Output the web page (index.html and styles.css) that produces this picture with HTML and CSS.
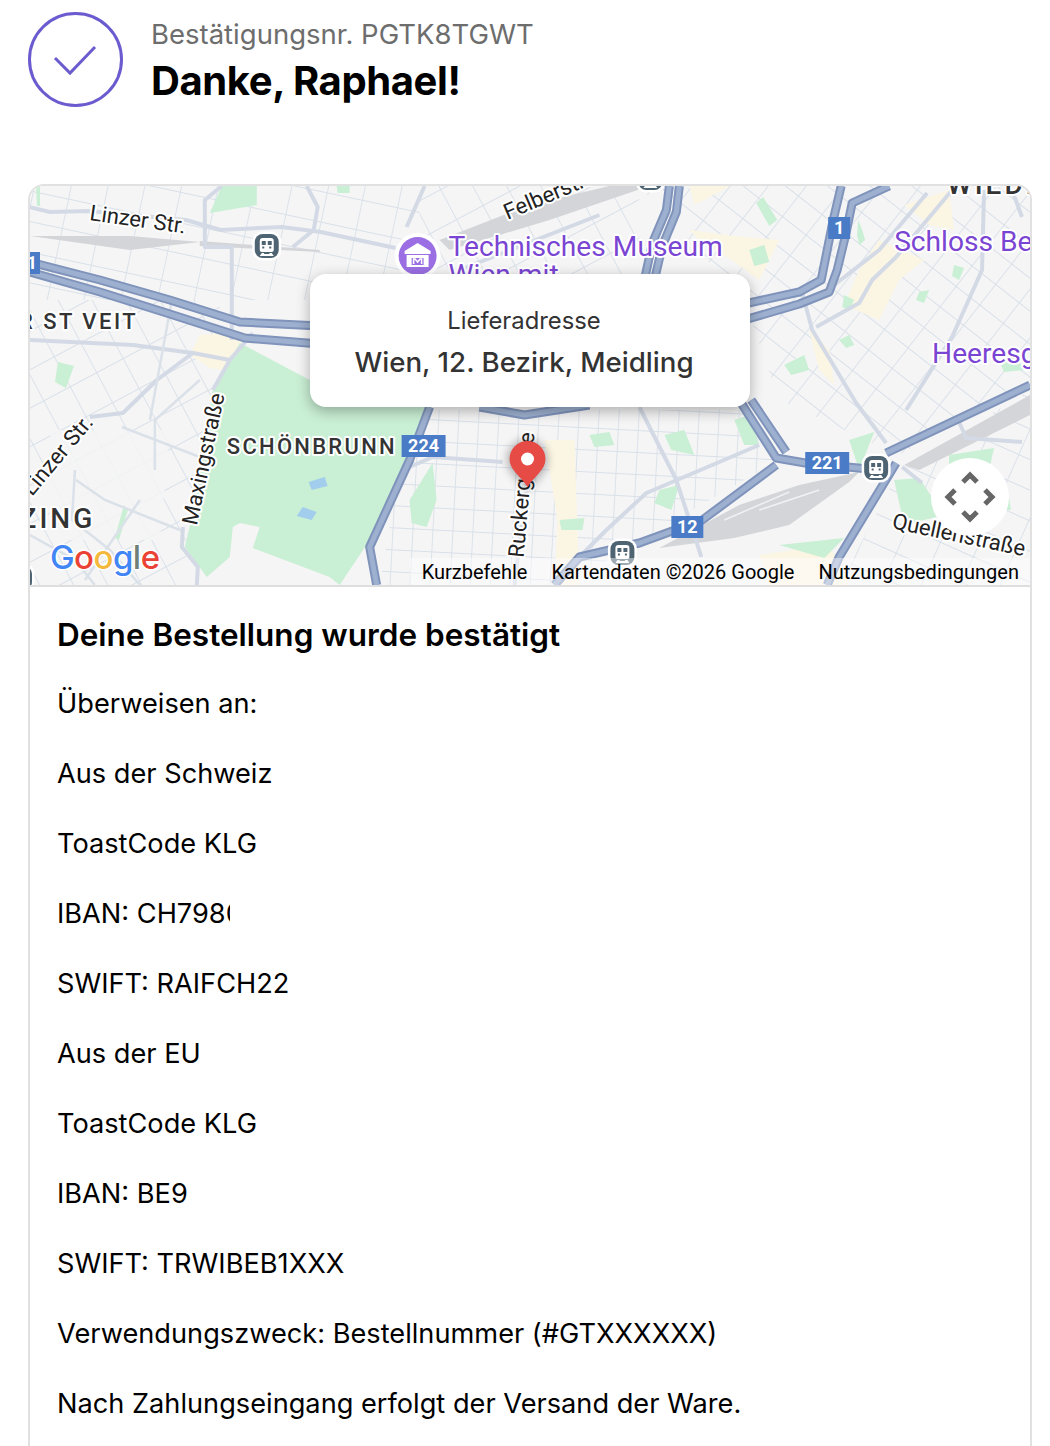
FILE: index.html
```html
<!DOCTYPE html>
<html lang="de">
<head>
<meta charset="utf-8">
<title>Danke</title>
<link rel="stylesheet" href="styles.css">
</head>
<body>
<header class="head">
  <svg class="check" viewBox="0 0 95 95" aria-hidden="true"><circle cx="47.500" cy="47.500" r="46" class="check-ring"/><path d="M27 46 L42 61 L67 35" class="check-tick"/></svg>
  <div class="head-text">
    <div class="conf">Bestätigungsnr. PGTK8TGWT</div>
    <h1 class="thanks">Danke, Raphael!</h1>
  </div>
</header>
<main class="card">
  <section class="map">
    <svg class="map-svg" viewBox="30 186 1001 399" preserveAspectRatio="none" aria-hidden="true">
      <defs>
        <pattern id="g1" width="36" height="30" patternUnits="userSpaceOnUse" patternTransform="rotate(12)"><path d="M0 0H36M0 0V30" class="fine"/></pattern>
        <pattern id="g2" width="30" height="34" patternUnits="userSpaceOnUse" patternTransform="rotate(-28)"><path d="M0 0H30M0 0V34" class="fine"/></pattern>
        <pattern id="g3" width="30" height="26" patternUnits="userSpaceOnUse" patternTransform="rotate(38)"><path d="M0 0H30M0 0V26" class="fine"/></pattern>
        <pattern id="g4" width="20" height="22" patternUnits="userSpaceOnUse" patternTransform="rotate(3)"><path d="M0 0H20M0 0V22" class="fine"/></pattern>
        <pattern id="g5" width="36" height="28" patternUnits="userSpaceOnUse" patternTransform="rotate(24)"><path d="M0 0H36M0 0V28" class="fine"/></pattern>
        <filter id="soft" x="-50%" y="-50%" width="200%" height="200%"><feGaussianBlur stdDeviation="5"/></filter>
        <g id="station">
          <rect x="-14.500" y="-14.500" width="29" height="29" rx="10" class="st-out"/>
          <rect x="-12" y="-12" width="24" height="24" rx="8" class="st-in"/>
          <path d="M-7 -5Q-7 -8 -4 -8H4Q7 -8 7 -5V4Q7 6 5 6H-5Q-7 6 -7 4ZM-5 -5V-1H-1V-5ZM1 -5V-1H5V-5ZM-4.500 2.500H-2.500V.5H-4.500ZM2.500 2.500H4.500V.5H2.500Z" class="st-ic"/>
          <path d="M-5 7H-2.500L-3 8H3L2.500 7H5L7 10H-7Z" class="st-ic"/>
        </g>
        <g id="hwlines">
          <path d="M30 262L100 280L170 300L240 322L320 326"/>
          <path d="M30 272L100 292L170 314L245 338L320 344"/>
          <path d="M670 186L667 210L653 243L645 280"/>
          <path d="M680 186L677 212L663 246L655 280"/>
          <path d="M890 186L853 203L846 237L838 270L830 292L800 304L745 320"/>
          <path d="M842 186L834 220L822 280L800 292L745 304"/>
          <path d="M740 400L777 458L806 463L880 470"/>
          <path d="M752 400L787 452"/>
          <path d="M777 465L703 520L640 543L580 557L555 585"/>
          <path d="M887 453L1031 385"/>
          <path d="M897 463L840 557L828 585"/>
          <path d="M430 407L410 460L370 547L377 585"/>
          <path d="M480 407L525 415L590 405"/>
        </g>
      </defs>
      <rect x="30" y="186" width="1001" height="399" class="land"/>

      <path d="M30 186H420V300H30Z" fill="url(#g1)"/>
      <path d="M420 186H640V280H420Z" fill="url(#g2)"/>
      <path d="M640 186H1031V380L900 455L780 400L745 300Z" fill="url(#g3)"/>
      <path d="M30 300H220V400L180 585H30Z" fill="url(#g2)"/>
      <path d="M410 410H750L780 460L640 540L570 585H380Z" fill="url(#g4)"/>
      <path d="M900 470L1031 390V585H840Z" fill="url(#g5)"/>
      <path d="M50 430H170L160 540H50Z" class="land-soft"/>

      <g class="built">
        <path d="M200 335L245 332L238 352L240 372L210 368L190 355Z"/>
        <path d="M545 440H575L580 585H555L558 520Z"/>
        <path d="M690 230L735 236L780 240L760 280L735 262L700 240Z"/>
        <path d="M860 270L880 240L925 260L900 280L880 320L845 305Z"/>
        <path d="M905 205L950 190L955 230L930 225Z"/>
        <path d="M810 330L830 350L835 385L820 370Z"/>
        <path d="M690 186H730L705 200L695 205Z"/>
        <path d="M760 555L830 545L850 585H770Z"/>
      </g>

      <g class="green">
        <path d="M213 390L240 343L310 380L430 407L410 460L370 540L340 585L330 577L253 548L260 527L240 523L233 527L230 557L207 577L185 547L196 500Z"/>
        <path d="M433 463L437 500L427 527L412 523L410 500Z"/>
        <path d="M222 186H257V205L210 213Z"/>
        <path d="M36 186H40V206H37Z"/>
        <path d="M337 186H350V193H338Z"/>
        <path d="M58 362L74 366L66 388L55 382Z"/>
        <path d="M124 505L128 510L119 540L115 538Z"/>
        <path d="M764 197L778 220L770 226L757 203Z"/>
        <path d="M750 250L765 245L770 262L755 266Z"/>
        <path d="M859 220L863 230L866 240L860 245L858 235Z"/>
        <path d="M955 265L965 268L960 280L953 276Z"/>
        <path d="M920 292L930 290L925 303L917 300Z"/>
        <path d="M845 295L855 300L850 310L843 307Z"/>
        <path d="M840 340L850 335L855 345L847 348Z"/>
        <path d="M785 365L805 355L810 370L792 375Z"/>
        <path d="M1000 360L1015 352L1025 370L1005 372Z"/>
        <path d="M665 435L685 430L695 455L672 450Z"/>
        <path d="M660 490L680 485L672 510L655 503Z"/>
        <path d="M735 420L750 415L760 445L745 445Z"/>
        <path d="M590 435L610 432L615 445L595 447Z"/>
        <path d="M560 520L585 518L583 530L562 530Z"/>
        <path d="M850 440L875 432L860 470Z"/>
        <path d="M895 480L920 478L945 515L905 525Z"/>
        <path d="M950 455L995 448L990 470L950 470Z"/>
        <path d="M780 545L845 538L825 558Z"/>
        <path d="M995 500L1010 498L1012 510L998 510Z"/>
      </g>
      <path d="M309 482L325 477L328 486L312 490Z" class="water"/>
      <path d="M297 516L303 507L317 512L312 520Z" class="water"/>

      <g class="rail">
        <path d="M30 236L130 236L200 242L130 250Z"/>
        <path d="M200 241L320 250L320 252L200 246Z"/>
        <path d="M440 240L530 205L610 186H650L550 220L450 250Z"/>
        <path d="M660 548L740 505L800 485L860 472L850 482L790 525L735 538Z"/>
        <path d="M905 465L1031 395V415L920 470Z"/>
      </g>
      <path d="M725 520L790 492M760 510L820 490" class="rail-streak"/>

      <g class="artery">
        <path d="M29 207L50 212L89 211L186 220L221 230L282 227L321 232L396 248"/>
        <path d="M222 186L205 200V247H232V340"/>
        <path d="M307 186L318 207L314 230L293 247"/>
        <path d="M425 186L407 227"/>
        <path d="M28 340L133 345L193 353L230 360L253 333"/>
        <path d="M193 353L157 380L123 413L90 417"/>
        <path d="M230 360L213 390"/>
        <path d="M183 527L182 547L198 567L197 585"/>
        <path d="M835 285L880 250L928 193"/>
        <path d="M817 327L860 303L873 280L897 257L953 190"/>
        <path d="M803 293L813 330L857 403L887 443"/>
        <path d="M985 190L983 270L953 337L907 410"/>
        <path d="M1013 190L1023 217"/>
        <path d="M760 445L647 493L607 530L580 557"/>
        <path d="M640 407L677 480L702 557"/>
        <path d="M960 422L967 438L1023 442"/>
        <path d="M903 467L923 483"/>
        <path d="M410 467L433 457L503 462"/>
        <path d="M530 460L515 585"/>
        <path d="M600 215L460 270"/>
      </g>
      <g class="thin">
        <path d="M122 427L200 457"/>
        <path d="M172 300L150 420M200 380L155 420V470M76 480L105 500L180 530"/>
        <path d="M30 535L75 560L95 585M140 500L85 580"/>
        <path d="M75 470L72 520L110 550L140 585"/>
      </g>

      <use href="#hwlines" class="hw-out"/>
      <use href="#hwlines" class="hw-in"/>

      <g>
        <use href="#station" x="267" y="246"/>
        <use href="#station" x="877" y="468"/>
        <use href="#station" x="623" y="553"/>
        <use href="#station" x="651" y="178"/>
        <use href="#station" x="20" y="578"/>
      </g>

      <g>
        <circle cx="418" cy="256" r="23" class="poi-out"/>
        <circle cx="418" cy="256" r="19" class="poi-in"/>
        <path d="M418 243L431 251V254H405V251ZM407 255H429V267H407Z" class="poi-ic"/>
        <path d="M412 258H424V265H412Z" class="poi-in"/>
        <path d="M414 264V259H415.500L418 262L420.500 259H422V264" class="poi-m"/>
        <text x="449" y="256" class="t-poi">Technisches Museum</text>
        <text x="449" y="284" class="t-poi">Wien mit</text>
        <text x="895" y="251" class="t-poi">Schloss Belvedere</text>
        <text x="933" y="363" class="t-poi">Heeresgeschichtliches</text>
      </g>

      <g>
        <text transform="translate(89 220) rotate(8)" class="t-road">Linzer Str.</text>
        <text transform="translate(508 220) rotate(-23)" class="t-road">Felberstraße</text>
        <text transform="translate(32 497) rotate(-50)" class="t-road">Linzer Str.</text>
        <text transform="translate(197 526) rotate(-78)" class="t-road">Maxingstraße</text>
        <text transform="translate(524 558) rotate(-85)" class="t-road">Ruckergasse</text>
        <text transform="translate(892 528) rotate(12)" class="t-road">Quellenstraße</text>
      </g>
      <g>
        <text x="948" y="194" class="t-dist">WIEDEN</text>
        <text x="-30" y="329" class="t-dist t-small">OBER ST VEIT</text>
        <text x="227" y="454" class="t-dist t-small t-tight">SCHÖNBRUNN</text>
        <text x="-43" y="528" class="t-dist">PENZING</text>
      </g>

      <g class="shield">
        <rect x="18" y="252" width="22" height="22"/><text x="32" y="269">1</text>
        <rect x="829" y="217" width="22" height="22"/><text x="840" y="234">1</text>
        <rect x="402" y="435" width="44" height="22"/><text x="424" y="452">224</text>
        <rect x="806" y="452" width="44" height="22"/><text x="828" y="469">221</text>
        <rect x="672" y="516" width="32" height="22"/><text x="688" y="533">12</text>
      </g>

      <text x="50" y="569" class="glogo"><tspan class="g-b">G</tspan><tspan class="g-r">o</tspan><tspan class="g-y">o</tspan><tspan class="g-b">g</tspan><tspan class="g-g">l</tspan><tspan class="g-r">e</tspan></text>

      <path d="M528 491L514 474A20 20 0 1 1 542 474Z" class="pin-shadow" filter="url(#soft)"/>
      <path d="M528 487C521 476 510 470 510 459A18 18 0 0 1 546 459C546 470 535 476 528 487Z" class="pin"/>
      <circle cx="528" cy="459" r="6.500" class="pin-dot"/>
    </svg>

    <div class="popup">
      <div class="popup-label">Lieferadresse</div>
      <div class="popup-value">Wien, 12. Bezirk, Meidling</div>
    </div>

    <button class="nav" aria-label="Karte bewegen">
      <svg viewBox="0 0 78 78" class="nav-ic"><path d="M32 24L39 17L46 24M32 54L39 61L46 54M24 32L17 39L24 46M54 32L61 39L54 46"/></svg>
    </button>

    <div class="attrib">
      <span>Kurzbefehle</span>
      <span class="attrib-next">Kartendaten ©2026 Google</span>
      <span class="attrib-next">Nutzungsbedingungen</span>
    </div>
  </section>

  <section class="body">
    <h2 class="title">Deine Bestellung wurde bestätigt</h2>
    <p>Überweisen an:</p>
    <p>Aus der Schweiz</p>
    <p>ToastCode KLG</p>
    <p><span class="cut">IBAN: CH7980</span></p>
    <p>SWIFT: RAIFCH22</p>
    <p>Aus der EU</p>
    <p>ToastCode KLG</p>
    <p>IBAN: BE9</p>
    <p>SWIFT: TRWIBEB1XXX</p>
    <p>Verwendungszweck: Bestellnummer (#GTXXXXXX)</p>
    <p>Nach Zahlungseingang erfolgt der Versand der Ware.</p>
  </section>
</main>
</body>
</html>
```
FILE: styles.css
```css
* { box-sizing: border-box; }
html, body { margin: 0; height: 1446px; overflow: hidden; background: #fff; }
body { padding: 12px 18px 0 28px; font-family: Inter, "Liberation Sans", sans-serif; color: #000; }

.head { display: flex; gap: 28px; align-items: flex-start; height: 172px; }
.check { width: 95px; height: 95px; flex: none; }
.check-ring { fill: none; stroke: #6a5ccf; stroke-width: 3; }
.check-tick { fill: none; stroke: #6a5ccf; stroke-width: 3; }
.head-text { padding-top: 5px; }
.conf { font-size: 27.500px; line-height: 34px; color: #6d6d6d; }
.thanks { margin: 6px 0 0; font-size: 40px; line-height: 48px; font-weight: 700; letter-spacing: -0.4px; }

.card { border: 2px solid #e1e1e1; border-bottom: 0; border-radius: 16px 16px 0 0; overflow: hidden; }

.map { position: relative; height: 401px; border-bottom: 2px solid #dedede; }
.map-svg { display: block; width: 100%; height: 399px; }

.land { fill: #f5f5f5; }
.land-soft { fill: #f5f5f5; opacity: .8; }
.fine { fill: none; stroke: #d9e0e9; stroke-width: 1.8; }
.built path { fill: #fbf5e3; }
.green path { fill: #c9efd4; }
.water { fill: #a3cdec; }
.rail path { fill: #d3d5d9; }
.rail-streak { fill: none; stroke: #f0f1f2; stroke-width: 1.5; }
.artery path { fill: none; stroke: #d3dae5; stroke-width: 4; stroke-linejoin: round; }
.thin path { fill: none; stroke: #dbe1e9; stroke-width: 2.5; }
.hw-out { fill: none; stroke: #7f93bb; stroke-width: 9; stroke-linejoin: round; }
.hw-in { fill: none; stroke: #9db0cf; stroke-width: 5; stroke-linejoin: round; }

.st-out { fill: #fff; }
.st-in { fill: #4f6473; }
.st-ic { fill: #fff; fill-rule: evenodd; }
.poi-out { fill: #fff; }
.poi-in { fill: #9b6fe3; }
.poi-ic { fill: #fff; }
.poi-m { fill: none; stroke: #fff; stroke-width: 1.5; }

.map-svg text { font-family: Roboto, sans-serif; paint-order: stroke; stroke: #fff; stroke-linejoin: round; }
.t-poi { font-size: 28.200px; fill: #7a45d2; stroke-width: 4px; }
.t-road { font-size: 22px; fill: #222; stroke-width: 4px; }
.t-dist { font-size: 28px; font-weight: 500; fill: #333; stroke-width: 4px; letter-spacing: 3px; }
.t-small { font-size: 22px; letter-spacing: 2.500px; }
.t-tight { letter-spacing: 2.300px; }
.shield rect { fill: #4a7bc6; }
.shield text { font-size: 18px; font-weight: 700; fill: #fff; text-anchor: middle; stroke: none; }

.map-svg .glogo { font-family: Inter, sans-serif; font-size: 33px; font-weight: 500; stroke-width: 3px; letter-spacing: -0.5px; }
.g-b { fill: #4285f4; }
.g-r { fill: #ea4335; }
.g-y { fill: #f4b93c; }
.g-g { fill: #6f7f78; }

.pin { fill: #e64b45; }
.pin-dot { fill: #fff; }
.pin-shadow { fill: #000; opacity: .3; }

.popup {
  position: absolute; left: 280px; top: 88px; width: 440px; height: 133px;
  display: flex; flex-direction: column; align-items: center;
  padding: 30px 12px 0 0;
  background: #fff; border-radius: 16px;
  box-shadow: 0 4px 14px rgba(0, 0, 0, .3);
  color: #333;
}
.popup-label { font-size: 23.800px; line-height: 34px; }
.popup-value { margin-top: 7px; font-size: 27.700px; line-height: 34px; font-weight: 500; }

.nav {
  position: absolute; left: 901px; top: 272px; width: 78px; height: 78px; padding: 0;
  border: 0; border-radius: 50%; background: #fff;
}
.nav-ic { display: block; width: 78px; height: 78px; }
.nav-ic path { fill: none; stroke: #666; stroke-width: 5; }

.attrib {
  position: absolute; right: 0; bottom: 0; height: 27px; padding: 0 11px 0 12px;
  display: flex; align-items: center;
  font-family: Roboto, sans-serif; font-size: 20px; color: #000;
  background: rgba(255, 255, 255, .45);
}
.attrib-next { margin-left: 24px; }

.body { padding: 27px 27px 0; }
.title { margin: 0 0 27px; font-size: 31.500px; line-height: 42px; font-weight: 600; }
.body p { margin: 0 0 28px; font-size: 27.200px; line-height: 42px; }
.cut { display: inline-block; width: 173px; overflow: hidden; white-space: nowrap; vertical-align: top; }
```
